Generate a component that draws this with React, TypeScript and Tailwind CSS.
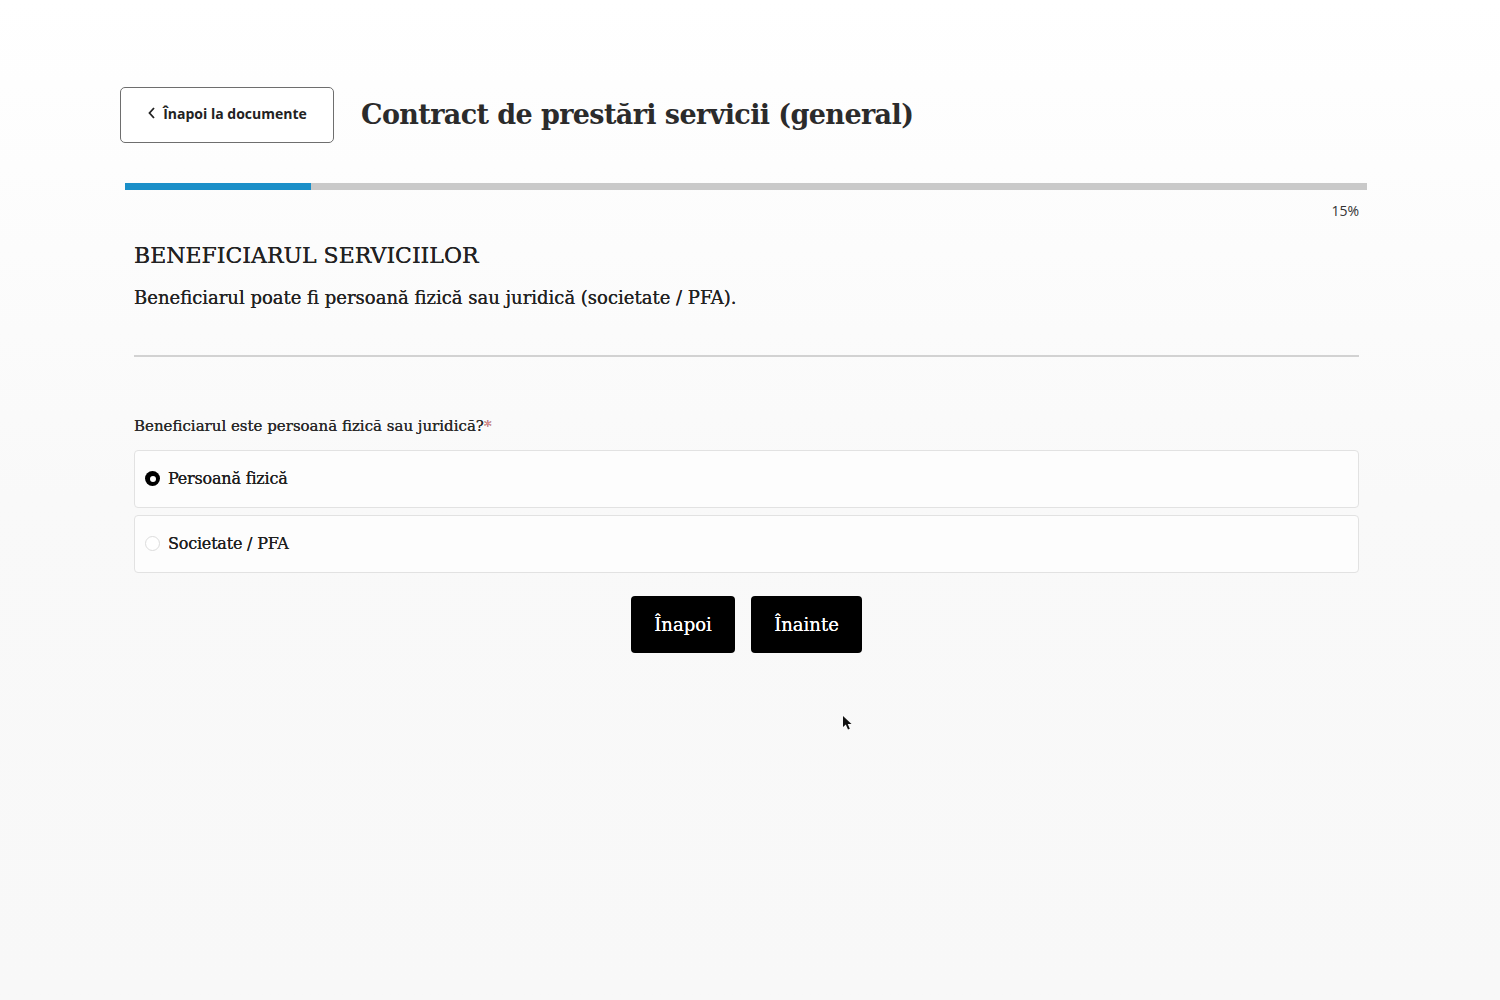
import React from "react";

const serif = "font-['DejaVu_Serif','Liberation_Serif',serif]";
const sans = "font-['Open_Sans','Noto_Sans',sans-serif]";

const RadioOption: React.FC<{ label: string; checked?: boolean }> = ({ label, checked }) => (
  <label className="flex h-[58px] items-center gap-[8px] rounded-[4px] border border-[#e2e2e2] bg-[#fdfdfd] px-[10px]">
    {checked ? (
      <span className="flex h-[15px] w-[15px] items-center justify-center rounded-full bg-black">
        <span className="h-[6px] w-[6px] rounded-full bg-white" />
      </span>
    ) : (
      <span className="h-[15px] w-[15px] rounded-full border border-[#dcdcdc] bg-white" />
    )}
    <span className={`${serif} text-[16px] tracking-[-0.2px] text-[#1f1f1f] [text-shadow:0_0_0.4px_#1f1f1f]`}>
      {label}
    </span>
  </label>
);

const App: React.FC = () => {
  const progress = 15;

  return (
    <div className="relative min-h-screen w-full bg-gradient-to-b from-[#ffffff] via-[#f9f9f9] to-[#f8f8f8] pt-[87px]">
      <div className="ml-[120px] flex items-center gap-[27px]">
        <button
          className={`${sans} flex h-[56px] w-[214px] items-center justify-center gap-[6px] rounded-[5px] border border-[#6e6e6e] bg-white pb-[4px] text-[14px] font-bold text-[#222]`}
        >
          <svg width="10" height="14" viewBox="0 0 10 14" fill="none">
            <path d="M7 2 L2.5 7 L7 12" stroke="#222" strokeWidth="1.8" />
          </svg>
          Înapoi la documente
        </button>
        <h1 className={`${serif} text-[27px] font-bold tracking-[-0.6px] text-[#2b2b2b]`}>
          Contract de prestări servicii (general)
        </h1>
      </div>

      <div className="ml-[125px] mt-[40px] h-[7px] w-[1242px] bg-[#c9c9c9]">
        <div className="h-full bg-[#1a8fc8]" style={{ width: `${progress}%` }} />
      </div>
      <div className={`${sans} mt-[10px] w-[1359px] text-right text-[14px] text-[#333]`}>
        {progress}%
      </div>

      <div className="ml-[134px] w-[1225px]">
        <h2 className={`${serif} mt-[18px] text-[22px] text-[#222] [text-shadow:0_0_0.4px_#222]`}>
          BENEFICIARUL SERVICIILOR
        </h2>
        <p className={`${serif} mt-[12px] text-[18px] text-[#222] [text-shadow:0_0_0.4px_#222]`}>
          Beneficiarul poate fi persoană fizică sau juridică (societate / PFA).
        </p>
        <div className="mt-[44px] h-[2px] bg-[#d2d2d2]" />

        <div className={`${serif} mt-[58px] text-[15px] text-[#2a2a2a] [text-shadow:0_0_0.3px_#2a2a2a]`}>
          Beneficiarul este persoană fizică sau juridică?
          <span className="text-[#f29a9a]">*</span>
        </div>
        <div className="mt-[12px] flex flex-col gap-[7px]">
          <RadioOption label="Persoană fizică" checked />
          <RadioOption label="Societate / PFA" />
        </div>

        <div className="mt-[23px] flex justify-center gap-[16px]">
          <button className={`${serif} h-[57px] w-[104px] rounded-[4px] bg-black text-[18px] text-white [text-shadow:0_0_0.5px_#fff]`}>
            Înapoi
          </button>
          <button className={`${serif} h-[57px] w-[111px] rounded-[4px] bg-black text-[18px] text-white [text-shadow:0_0_0.5px_#fff]`}>
            Înainte
          </button>
        </div>
      </div>

      {/* mouse pointer captured in the screenshot */}
      <svg className="absolute left-[842px] top-[715px] blur-[0.6px]" width="11" height="16" viewBox="0 0 11 16">
        <path d="M1 1 L1 12 L3.8 9.6 L6 14.5 L7.8 13.7 L5.7 9 L9.5 9 Z" fill="#111" />
      </svg>
    </div>
  );
};

export default App;
